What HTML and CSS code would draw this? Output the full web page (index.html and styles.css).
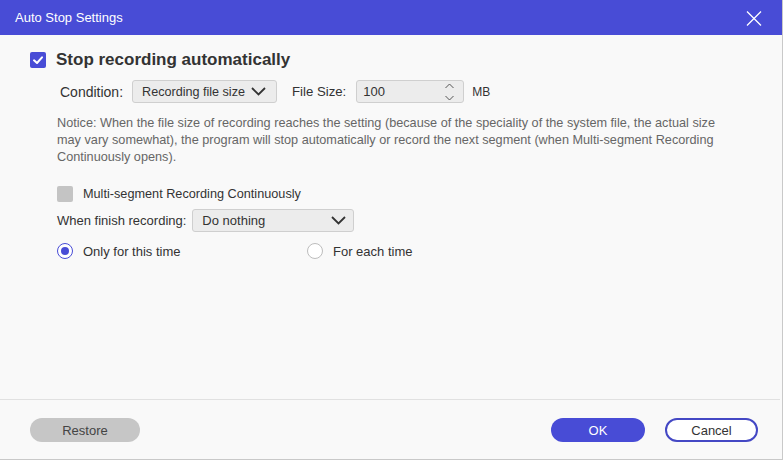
FILE: index.html
```html
<!DOCTYPE html>
<html lang="en">
<head>
<meta charset="utf-8">
<title>Auto Stop Settings</title>
<link rel="stylesheet" href="styles.css">
</head>
<body>
<div class="window">
  <div class="titlebar">
    <span class="title">Auto Stop Settings</span>
    <svg class="close" width="16" height="15" viewBox="0 0 16 15"><path d="M1 0.5 L15 14.5 M15 0.5 L1 14.5" stroke="#fff" stroke-width="1.3" fill="none"/></svg>
  </div>
  <div class="content">
    <div class="row header">
      <span class="checkbox checked"><svg width="16" height="16" viewBox="0 0 16 16"><path d="M4 8.3 L7 11 L12 5.3" stroke="#fff" stroke-width="2" fill="none" stroke-linecap="round" stroke-linejoin="round"/></svg></span>
      <span class="header-text">Stop recording automatically</span>
    </div>
    <div class="row condition">
      <span class="label">Condition:</span>
      <div class="select select-cond">
        <span>Recording file size</span>
        <svg width="15" height="9" viewBox="0 0 15 9"><path d="M1 1 L7.5 7.5 L14 1" stroke="#333" stroke-width="1.8" fill="none"/></svg>
      </div>
      <span class="label label-size">File Size:</span>
      <div class="spin">
        <span>100</span>
        <div class="arrows">
          <svg width="9" height="6" viewBox="0 0 9 6"><path d="M0.5 5 L4.5 1 L8.5 5" stroke="#555" stroke-width="1" fill="none"/></svg>
          <svg width="9" height="6" viewBox="0 0 9 6"><path d="M0.5 1 L4.5 5 L8.5 1" stroke="#555" stroke-width="1" fill="none"/></svg>
        </div>
      </div>
      <span class="unit">MB</span>
    </div>
    <p class="notice">Notice: When the file size of recording reaches the setting (because of the speciality of the system file, the actual size<br>may vary somewhat), the program will stop automatically or record the next segment (when Multi-segment Recording<br>Continuously opens).</p>
    <div class="row multi">
      <span class="checkbox off"></span>
      <span class="text">Multi-segment Recording Continuously</span>
    </div>
    <div class="row finish">
      <span class="text">When finish recording:</span>
      <div class="select select-finish">
        <span>Do nothing</span>
        <svg width="15" height="9" viewBox="0 0 15 9"><path d="M1 1 L7.5 7.5 L14 1" stroke="#333" stroke-width="1.8" fill="none"/></svg>
      </div>
    </div>
    <div class="row radios">
      <div class="radio-item first">
        <span class="radio on"></span>
        <span class="text">Only for this time</span>
      </div>
      <div class="radio-item">
        <span class="radio"></span>
        <span class="text">For each time</span>
      </div>
    </div>
  </div>
  <div class="footer">
    <button class="btn restore">Restore</button>
    <div class="spacer"></div>
    <button class="btn ok">OK</button>
    <button class="btn cancel">Cancel</button>
  </div>
</div>
</body>
</html>
```

FILE: styles.css
```css
* { box-sizing: border-box; }
html, body {
  margin: 0;
  padding: 0;
  background: #f9f9f9;
}
body {
  font-family: "Liberation Sans", Arial, sans-serif;
  color: #333;
}
.window {
  width: 783px;
  height: 460px;
  display: flex;
  flex-direction: column;
  background: #f9f9f9;
  border-right: 1px solid #c9c9c9;
  border-bottom: 1px solid #c9c9c9;
}
.titlebar {
  height: 35px;
  flex: none;
  background: #484cd6;
  color: #fff;
  display: flex;
  align-items: center;
  justify-content: space-between;
  padding: 0 20px 0 15px;
  font-size: 13px;
}
.title { line-height: 16px; }
.close { display: block; margin-top: 1px; }
.content {
  flex: 1;
  padding-left: 30px;
  border-bottom: 1px solid #e1e1e1;
  margin-right: 2px;
}
.row {
  display: flex;
  align-items: center;
}
.checkbox {
  width: 16px;
  height: 16px;
  border-radius: 2px;
  flex: none;
  display: block;
}
.checkbox svg { display: block; }
.checkbox.checked { background: #484cd6; }
.checkbox.off { background: #c4c4c4; }
.header {
  margin-top: 17px;
  height: 16px;
}
.header-text {
  margin-left: 10px;
  font-size: 17px;
  font-weight: bold;
  color: #333;
}
.condition {
  margin-top: 12px;
  height: 23px;
  padding-left: 30px;
}
.label {
  font-size: 14px;
  color: #333;
}
.select {
  height: 23px;
  border: 1px solid #cfcfcf;
  border-radius: 3px;
  background: #ececec;
  display: flex;
  align-items: center;
  justify-content: space-between;
  font-size: 12.6px;
  color: #333;
}
.select svg { display: block; flex: none; }
.select-cond {
  margin-left: 9px;
  width: 145px;
  padding: 0 10px 0 9px;
}
.select-finish { font-size: 13px; }
.label-size { margin-left: 15px; font-size: 13.2px; }
.spin {
  margin-left: 10px;
  width: 108px;
  height: 23px;
  border: 1px solid #cfcfcf;
  border-radius: 3px;
  background: #ececec;
  display: flex;
  align-items: center;
  justify-content: space-between;
  padding: 0 9px 0 6px;
  font-size: 13px;
  color: #333;
}
.arrows {
  display: flex;
  flex-direction: column;
  gap: 6px;
}
.arrows svg { display: block; }
.unit {
  margin-left: 8px;
  font-size: 12px;
  color: #333;
}
.notice {
  margin: 12px 0 0 27px;
  font-size: 12.7px;
  line-height: 17px;
  color: #666;
}
.text {
  font-size: 13px;
  color: #333;
}
.multi {
  margin-top: 20px;
  height: 16px;
  padding-left: 27px;
}
.multi .text { margin-left: 10px; font-size: 12.7px; }
.finish {
  margin-top: 7px;
  height: 23px;
  padding-left: 27px;
}
.select-finish {
  margin-left: 6px;
  width: 162px;
  padding: 0 7px 0 9px;
}
.radios {
  margin-top: 11px;
  height: 16px;
  padding-left: 27px;
}
.radio-item {
  display: flex;
  align-items: center;
}
.radio-item.first { width: 250px; }
.radio-item .text { margin-left: 10px; }
.radio {
  width: 16px;
  height: 16px;
  border-radius: 50%;
  border: 1px solid #bdbdbd;
  background: #fff;
  display: flex;
  align-items: center;
  justify-content: center;
}
.radio.on {
  border: 1.5px solid #484cd6;
}
.radio.on::after {
  content: "";
  width: 8px;
  height: 8px;
  border-radius: 50%;
  background: #484cd6;
}
.footer {
  height: 59px;
  flex: none;
  display: flex;
  align-items: center;
  padding: 0 24px 0 30px;
}
.spacer { flex: 1; }
.btn {
  height: 24px;
  border-radius: 12px;
  font-family: "Liberation Sans", Arial, sans-serif;
  font-size: 13px;
  padding: 0;
  border: none;
  margin-top: 1px;
}
.restore {
  width: 110px;
  background: #c6c6c6;
  color: #444;
}
.ok {
  width: 94px;
  background: #484cd6;
  color: #fff;
}
.cancel {
  width: 93px;
  margin-left: 20px;
  background: #fff;
  border: 2px solid #4448c4;
  color: #333;
}
```
